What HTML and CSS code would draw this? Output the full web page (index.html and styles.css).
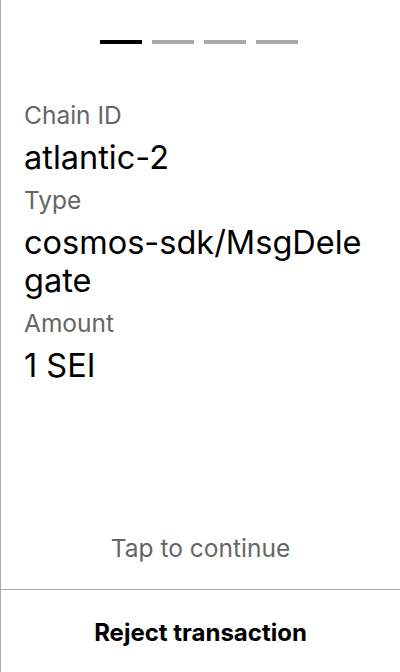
FILE: index.html
```html
<!DOCTYPE html>
<html>
<head>
<meta charset="utf-8">
<link rel="stylesheet" href="styles.css">
</head>
<body>
<div class="screen">
  <div class="progress">
    <span class="bar active"></span>
    <span class="bar"></span>
    <span class="bar"></span>
    <span class="bar"></span>
  </div>
  <div class="details">
    <div class="label">Chain ID</div>
    <div class="value">atlantic-2</div>
    <div class="label">Type</div>
    <div class="value">cosmos-sdk/MsgDelegate</div>
    <div class="label">Amount</div>
    <div class="value">1 SEI</div>
  </div>
  <div class="tap">Tap to continue</div>
  <div class="reject">Reject transaction</div>
</div>
</body>
</html>
```
FILE: styles.css
```css
html, body {
  margin: 0;
  padding: 0;
  background: #fff;
}
body {
  font-family: Inter, "Noto Sans", sans-serif;
  color: #000;
}
.screen {
  box-sizing: border-box;
  width: 400px;
  height: 672px;
  border-left: 1px solid #aaa;
  display: flex;
  flex-direction: column;
}
.progress {
  display: flex;
  justify-content: center;
  gap: 10px;
  padding: 40px 3px 0 0;
}
.bar {
  width: 42px;
  height: 4px;
  background: #aaa;
}
.bar.active {
  background: #000;
}
.details {
  padding: 57px 24px 0 23px;
  display: flex;
  flex-direction: column;
}
.label {
  font-size: 24.5px;
  line-height: 29px;
  color: #666;
  margin-top: 9.5px;
}
.label:first-child {
  margin-top: 0;
}
.value {
  font-size: 32.5px;
  line-height: 38px;
  margin-top: 8.5px;
  word-break: break-all;
}
.tap {
  margin-top: auto;
  text-align: center;
  font-size: 24.5px;
  line-height: 29px;
  color: #666;
  padding-bottom: 26px;
}
.reject {
  border-top: 1px solid #aaa;
  height: 83px;
  display: flex;
  align-items: center;
  justify-content: center;
  font-size: 24px;
  line-height: 29px;
  font-weight: 700;
  padding-top: 3px;
  box-sizing: border-box;
}
```
